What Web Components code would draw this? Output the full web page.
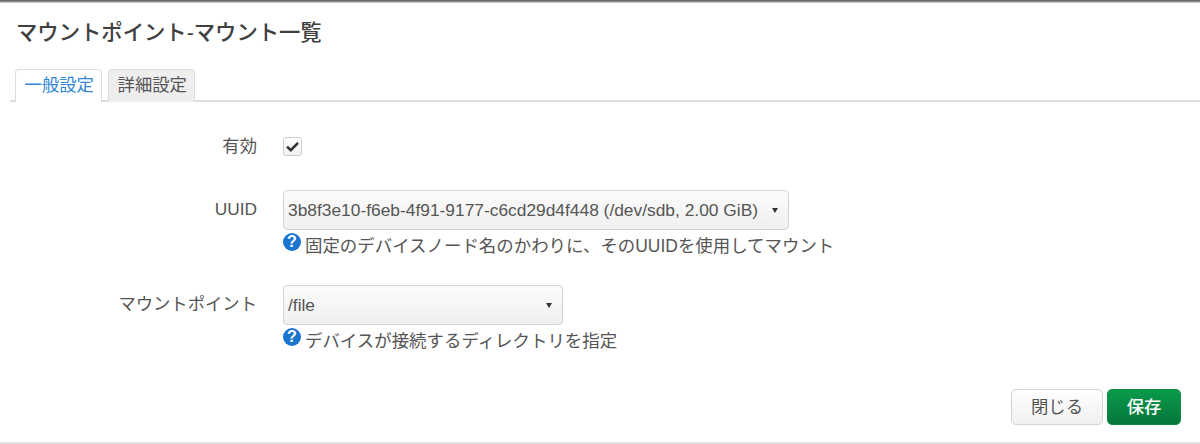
<!DOCTYPE html>
<html lang="ja">
<head>
<meta charset="utf-8">
<style>
html, body { margin: 0; height: 100%; background: #fff; }
body { font-family: "Liberation Sans", "Noto Sans CJK JP", sans-serif; font-size: 17.33px; color: #555; }
</style>
</head>
<body>
<mount-dialog>
  <span slot="title">マウントポイント-マウント一覧</span>
  <dlg-tab slot="tabs" active>一般設定</dlg-tab>
  <dlg-tab slot="tabs">詳細設定</dlg-tab>

  <form-row label="有効" check style="--row-top:35px"><fake-check></fake-check></form-row>
  <form-row label="UUID" style="--row-top:34px">
    <fake-select width="506">3b8f3e10-f6eb-4f91-9177-c6cd29d4f448 (/dev/sdb, 2.00 GiB)</fake-select>
    <help-text>固定のデバイスノード名のかわりに、そのUUIDを使用してマウント</help-text>
  </form-row>
  <form-row label="マウントポイント" style="--row-top:27px">
    <fake-select width="280">/file</fake-select>
    <help-text>デバイスが接続するディレクトリを指定</help-text>
  </form-row>

  <dlg-button slot="footer" style="--btn-width:92px">閉じる</dlg-button>
  <dlg-button slot="footer" kind="save" style="--btn-width:74px">保存</dlg-button>
</mount-dialog>

<script>
class MountDialog extends HTMLElement {
    connectedCallback() {
        this.attachShadow({mode: 'open'});
        this.shadowRoot.innerHTML = `
<style>
:host { display: flex; flex-direction: column; box-sizing: border-box; width: 1200px; height: 444px; padding-top: 3px; border-bottom: 2px solid #e2e2e2; background: linear-gradient(#555 0, #777 1px, #aaa 2px, #ddd 3px, #fff 3px); }
.title { font-size: 21.33px; font-weight: 500; color: #404040; line-height: 30px; padding: 15px 0 0 16px; }
.tabs { display: flex; gap: 6px; margin: 21px 0 0 10px; padding-left: 5px; border-bottom: 2px solid #ddd; height: 31px; }
.body { flex: 1; }
.footer { display: flex; justify-content: flex-end; gap: 4px; padding: 0 19px 17px 0; }
</style>
<div class="title"><slot name="title"></slot></div>
<div class="tabs"><slot name="tabs"></slot></div>
<div class="body"><slot></slot></div>
<div class="footer"><slot name="footer"></slot></div>`;
    }
}

class DlgTab extends HTMLElement {
    connectedCallback() {
        this.attachShadow({mode: 'open'});
        this.shadowRoot.innerHTML = `
<style>
:host { display: block; box-sizing: border-box; width: 87px; height: 33px; padding-left: 8.6px; line-height: 31px; color: #555; background: #eee; border: 1px solid #ddd; border-bottom: none; border-radius: 4px 4px 0 0; }
:host([active]) { color: #2f86d6; background: #fff; }
</style><slot></slot>`;
    }
}

class FormRow extends HTMLElement {
    connectedCallback() {
        this.attachShadow({mode: 'open'});
        const label = this.getAttribute("label");
        this.shadowRoot.innerHTML = `
<style>
:host { display: grid; grid-template-columns: 257px 1fr; column-gap: 26px; margin-top: var(--row-top); }
.label { text-align: right; line-height: 39px; color: #555; }
:host([check]) .label { line-height: 19px; }
.field { display: flex; flex-direction: column; align-items: flex-start; }
</style>
<div class="label">${label}</div>
<div class="field"><slot></slot></div>`;
    }
}

class FakeCheck extends HTMLElement {
    connectedCallback() {
        this.attachShadow({mode: 'open'});
        this.shadowRoot.innerHTML = `
<style>
:host { display: block; box-sizing: border-box; width: 19px; height: 19px; border: 1px solid #ccc; border-radius: 3px; background: linear-gradient(#fff, #f0f0f0); }
svg { display: block; }
</style>
<svg width="17" height="17" viewBox="0 0 17 17"><path d="M3 8.6 L6.8 12.2 L14 4.8" fill="none" stroke="#333" stroke-width="2.6"/></svg>`;
    }
}

class FakeSelect extends HTMLElement {
    connectedCallback() {
        this.attachShadow({mode: 'open'});
        this.shadowRoot.innerHTML = `
<style>
:host { display: flex; align-items: center; justify-content: space-between; box-sizing: border-box; width: ${this.getAttribute("width")}px; height: 40px; padding: 0 10px 0 4px; border: 1px solid #d4d4d4; border-radius: 4px; background: linear-gradient(#fcfcfc, #efefef); font-size: 17.38px; color: #555; white-space: nowrap; }
.arrow { width: 0; height: 0; border: 3.5px solid transparent; border-top: 5px solid #333; border-bottom: none; }
</style>
<slot></slot><span class="arrow"></span>`;
    }
}

class HelpText extends HTMLElement {
    connectedCallback() {
        this.attachShadow({mode: 'open'});
        this.shadowRoot.innerHTML = `
<style>
:host { display: flex; align-items: center; gap: 4px; height: 28px; font-size: 17.45px; color: #555; white-space: nowrap; }
.q { width: 18px; height: 18px; border-radius: 50%; background: #1b75d0; color: #fff; font-weight: 700; font-size: 16px; line-height: 18px; text-align: center; margin-top: -4px; }
</style>
<span class="q">?</span><span><slot></slot></span>`;
    }
}

class DlgButton extends HTMLElement {
    connectedCallback() {
        this.attachShadow({mode: 'open'});
        this.shadowRoot.innerHTML = `
<style>
:host { display: block; box-sizing: border-box; width: var(--btn-width); height: 36px; text-align: center; line-height: 34px; color: #555; border: 1px solid #d4d4d4; border-radius: 5px; background: linear-gradient(#fff, #f0f0f0); }
:host([kind="save"]) { color: #fff; font-weight: 500; border-color: #0a8a44; background: linear-gradient(#0a9a4c, #06763a); }
</style><slot></slot>`;
    }
}

customElements.define("mount-dialog", MountDialog);
customElements.define("dlg-tab", DlgTab);
customElements.define("form-row", FormRow);
customElements.define("fake-check", FakeCheck);
customElements.define("fake-select", FakeSelect);
customElements.define("help-text", HelpText);
customElements.define("dlg-button", DlgButton);
</script>
</body>
</html>
